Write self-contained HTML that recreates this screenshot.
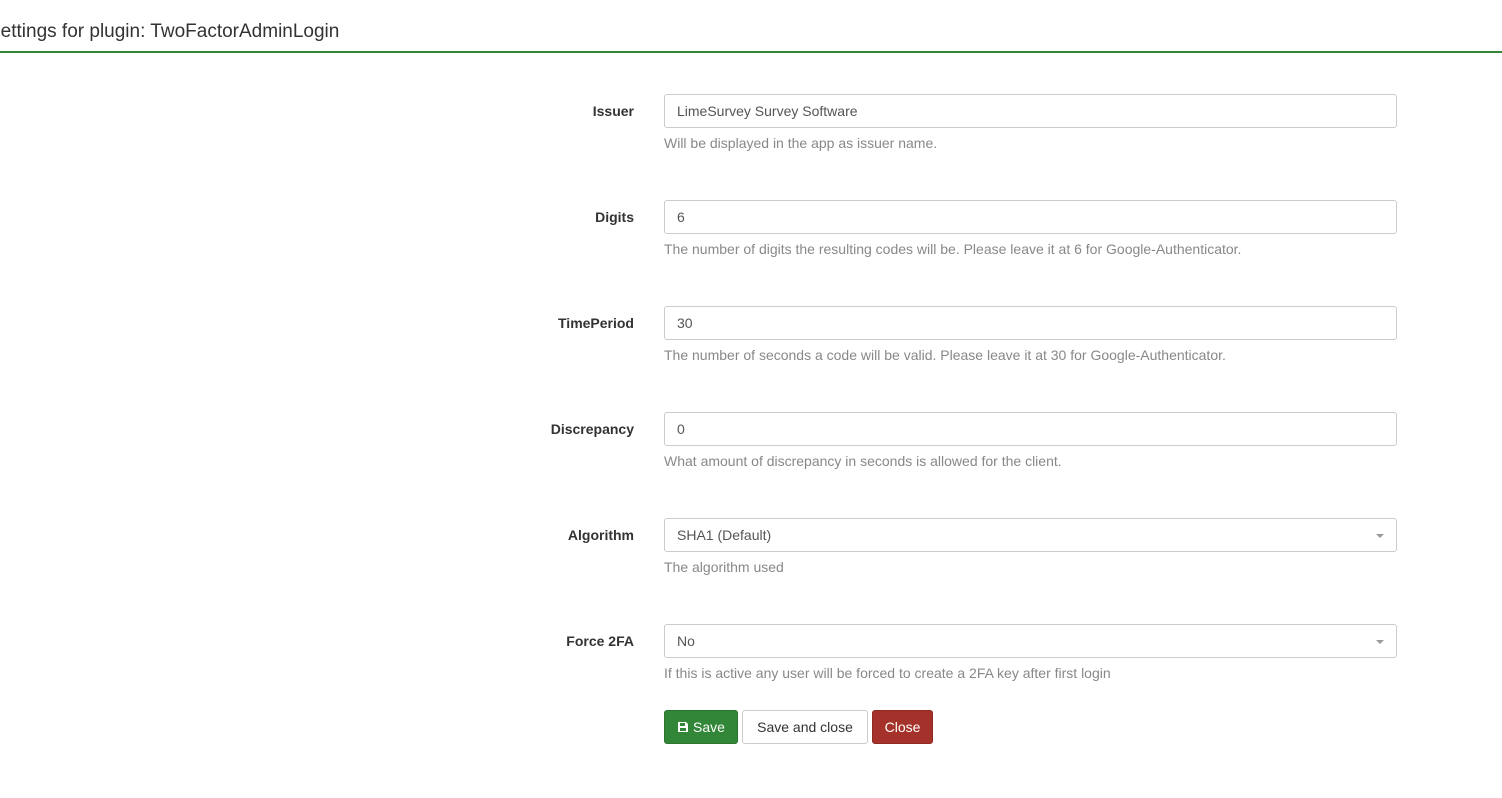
<!DOCTYPE html>
<html><head><style>
body{margin:0;width:1502px;height:798px;background:#fff;font-family:"Liberation Sans",Arial,sans-serif;font-size:14px;color:#333;overflow:hidden;position:relative}
.t{position:absolute;left:-12px;top:21px;font-size:19px;color:#333;white-space:nowrap}
.line{position:absolute;left:0;top:51px;width:1502px;height:2px;background:#328637}
.l{position:absolute;right:868px;font-weight:bold;font-size:14px;color:#333;text-align:right}
.i{position:absolute;left:664px;width:731px;height:32px;border:1px solid #ccc;border-radius:3px;box-sizing:content-box;font-size:14px;color:#555;line-height:32px;padding-left:0}
.i span{margin-left:12px}
.caret{position:absolute;right:12px;top:15px;border-left:4px solid transparent;border-right:4px solid transparent;border-top:4px solid #999}
.h{position:absolute;left:664px;color:#888;font-size:14px}
.b{position:absolute;top:710px;height:32px;border:1px solid;border-radius:3px;line-height:32px;font-size:14px;text-align:center}
</style></head><body>
<div class="t">Settings for plugin: TwoFactorAdminLogin</div>
<div class="line"></div>

<div class="l" style="top:103px">Issuer</div>
<div class="i" style="top:94px"><span>LimeSurvey Survey Software</span></div>
<div class="h" style="top:135px">Will be displayed in the app as issuer name.</div>

<div class="l" style="top:209px">Digits</div>
<div class="i" style="top:200px"><span>6</span></div>
<div class="h" style="top:241px">The number of digits the resulting codes will be. Please leave it at 6 for Google-Authenticator.</div>

<div class="l" style="top:315px">TimePeriod</div>
<div class="i" style="top:306px"><span>30</span></div>
<div class="h" style="top:347px">The number of seconds a code will be valid. Please leave it at 30 for Google-Authenticator.</div>

<div class="l" style="top:421px">Discrepancy</div>
<div class="i" style="top:412px"><span>0</span></div>
<div class="h" style="top:453px">What amount of discrepancy in seconds is allowed for the client.</div>

<div class="l" style="top:527px">Algorithm</div>
<div class="i" style="top:518px"><span>SHA1 (Default)</span><div class="caret"></div></div>
<div class="h" style="top:559px">The algorithm used</div>

<div class="l" style="top:633px">Force 2FA</div>
<div class="i" style="top:624px"><span>No</span><div class="caret"></div></div>
<div class="h" style="top:665px">If this is active any user will be forced to create a 2FA key after first login</div>

<div class="b" style="left:664px;width:72px;background:#328637;border-color:#2b7530;color:#fff">
<svg width="12" height="12" viewBox="0 0 12 12" style="vertical-align:-1px"><path d="M1 1h8l2 2v8H1z" fill="#fff"/><rect x="3" y="2" width="5" height="3" fill="#328637"/><rect x="3" y="7" width="6" height="3" fill="#328637"/></svg> Save</div>
<div class="b" style="left:742px;width:124px;background:#fff;border-color:#ccc;color:#333">Save and close</div>
<div class="b" style="left:872px;width:59px;background:#a5322a;border-color:#8f2a23;color:#fff">Close</div>
</body></html>
